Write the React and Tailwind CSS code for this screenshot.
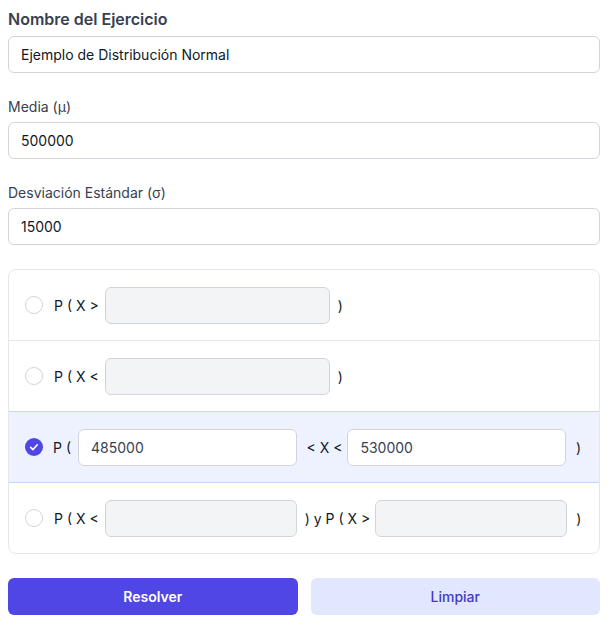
import React from "react";

function Radio({ checked }) {
  if (checked) {
    return (
      <span className="flex h-[18px] w-[18px] shrink-0 items-center justify-center rounded-full bg-[#4f46e5]">
        <svg viewBox="0 0 16 16" className="h-[12px] w-[12px]" fill="none" stroke="white" strokeWidth="2.2" strokeLinecap="round" strokeLinejoin="round">
          <path d="M3.5 8.5l3 3 6-6.5" />
        </svg>
      </span>
    );
  }
  return <span className="h-[18px] w-[18px] shrink-0 rounded-full border border-[#d1d5db] bg-white" />;
}

function Box({ value, white, className }) {
  return (
    <div
      className={
        "flex h-[37px] items-center rounded-md border border-[#d1d5db] px-3 text-[14px] text-[#374151] " +
        (white ? "bg-white " : "bg-[#f3f4f6] ") +
        className
      }
    >
      {value}
    </div>
  );
}

function Txt({ children, className }) {
  return <span className={"whitespace-pre text-[14px] text-[#111827] " + (className || "")}>{children}</span>;
}

export default function App() {
  return (
    <div className="w-[611px] bg-white px-2 pt-[8px] font-['Inter',sans-serif]" style={{ minHeight: 627 }}>
      <div className="w-[592px]">
        <div className="text-[16px] font-semibold leading-[22px] text-[#374151]">Nombre del Ejercicio</div>
        <div className="mt-[6px] flex h-[37px] items-center rounded-md border border-[#d1d5db] px-3 text-[14px] text-[#111827]">
          Ejemplo de Distribución Normal
        </div>

        <div className="mt-[24px] text-[14px] leading-[20px] text-[#374151]">Media (μ)</div>
        <div className="mt-[5px] flex h-[37px] items-center rounded-md border border-[#d1d5db] px-3 text-[14px] text-[#111827]">
          500000
        </div>

        <div className="mt-[24px] text-[14px] leading-[20px] text-[#374151]">Desviación Estándar (σ)</div>
        <div className="mt-[5px] flex h-[37px] items-center rounded-md border border-[#d1d5db] px-3 text-[14px] text-[#111827]">
          15000
        </div>

        <div className="mt-[24px] overflow-hidden rounded-lg border border-[#e5e7eb]">
          <div className="flex h-[71px] items-center border-b border-[#e5e7eb] pl-4">
            <Radio />
            <Txt className="ml-[11px]">{"P ( X >"}</Txt>
            <Box className="ml-[6px] w-[225px]" />
            <Txt className="ml-[8px]">)</Txt>
          </div>
          <div className="flex h-[71px] items-center border-b border-[#c7d2fe] pl-4">
            <Radio />
            <Txt className="ml-[11px]">{"P ( X <"}</Txt>
            <Box className="ml-[6px] w-[225px]" />
            <Txt className="ml-[8px]">)</Txt>
          </div>
          <div className="flex h-[71px] items-center border-b border-[#c7d2fe] bg-[#eef2ff] pl-4 pr-[18px]">
            <Radio checked />
            <Txt className="ml-[10px]">{"P ("}</Txt>
            <Box white value="485000" className="ml-[7px] w-[221px]" />
            <Txt className="ml-[9px]">{"< X <"}</Txt>
            <Box white value="530000" className="ml-[5px] w-[220px]" />
            <Txt className="ml-[10px]">)</Txt>
          </div>
          <div className="flex h-[70px] items-center pl-4">
            <Radio />
            <Txt className="ml-[11px]">{"P ( X <"}</Txt>
            <Box className="ml-[6px] w-[192px]" />
            <Txt className="ml-[8px]">{") y P ( X >"}</Txt>
            <Box className="ml-[5px] w-[192px]" />
            <Txt className="ml-[9px]">)</Txt>
          </div>
        </div>

        <div className="mt-[24px] flex gap-[13px]">
          <button className="h-[37px] w-[290px] rounded-md bg-[#4f46e5] text-[14px] font-semibold text-white">Resolver</button>
          <button className="h-[37px] w-[290px] rounded-md bg-[#e0e7ff] text-[14px] font-medium text-[#4338ca]">Limpiar</button>
        </div>
      </div>
    </div>
  );
}
